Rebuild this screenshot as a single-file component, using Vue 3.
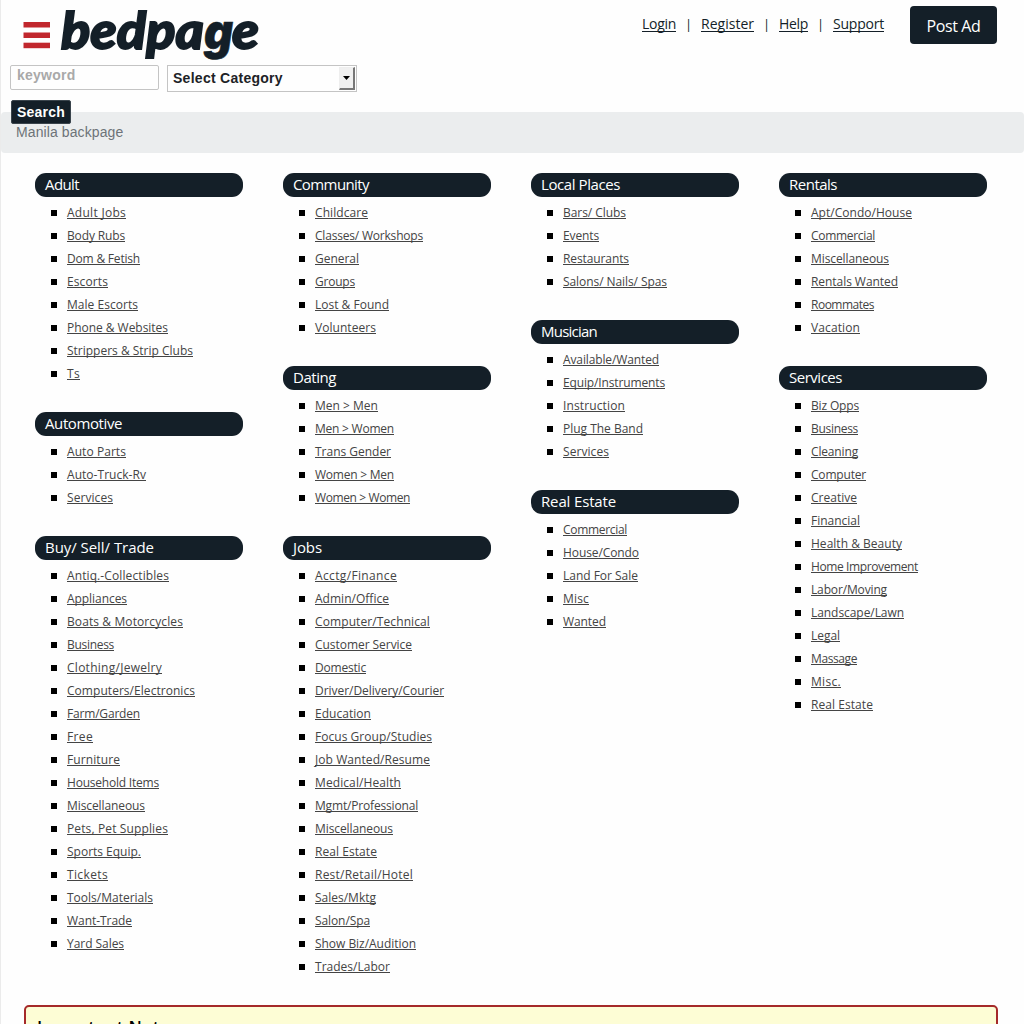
<script setup>
const columns = [
  [
    { title: 'Adult', w: 34, items: [['Adult Jobs', 59], ['Body Rubs', 58], ['Dom & Fetish', 73], ['Escorts', 41], ['Male Escorts', 71], ['Phone & Websites', 101], ['Strippers & Strip Clubs', 126], ['Ts', 13]] },
    { title: 'Automotive', w: 77, items: [['Auto Parts', 59], ['Auto-Truck-Rv', 79], ['Services', 46]] },
    { title: 'Buy/ Sell/ Trade', w: 109, items: [['Antiq.-Collectibles', 102], ['Appliances', 60], ['Boats & Motorcycles', 116], ['Business', 47], ['Clothing/Jewelry', 95], ['Computers/Electronics', 128], ['Farm/Garden', 73], ['Free', 26], ['Furniture', 53], ['Household Items', 92], ['Miscellaneous', 78], ['Pets, Pet Supplies', 101], ['Sports Equip.', 74], ['Tickets', 41], ['Tools/Materials', 86], ['Want-Trade', 65], ['Yard Sales', 57]] }
  ],
  [
    { title: 'Community', w: 76, items: [['Childcare', 53], ['Classes/ Workshops', 108], ['General', 44], ['Groups', 40], ['Lost & Found', 74], ['Volunteers', 61]] },
    { title: 'Dating', w: 43, items: [['Men > Men', 63], ['Men > Women', 79], ['Trans Gender', 76], ['Women > Men', 79], ['Women > Women', 95]] },
    { title: 'Jobs', w: 29, items: [['Acctg/Finance', 82], ['Admin/Office', 74], ['Computer/Technical', 115], ['Customer Service', 97], ['Domestic', 51], ['Driver/Delivery/Courier', 129], ['Education', 56], ['Focus Group/Studies', 117], ['Job Wanted/Resume', 115], ['Medical/Health', 86], ['Mgmt/Professional', 103], ['Miscellaneous', 78], ['Real Estate', 62], ['Rest/Retail/Hotel', 98], ['Sales/Mktg', 61], ['Salon/Spa', 55], ['Show Biz/Audition', 101], ['Trades/Labor', 75]] }
  ],
  [
    { title: 'Local Places', w: 79, items: [['Bars/ Clubs', 63], ['Events', 36], ['Restaurants', 66], ['Salons/ Nails/ Spas', 104]] },
    { title: 'Musician', w: 56, items: [['Available/Wanted', 96], ['Equip/Instruments', 102], ['Instruction', 62], ['Plug The Band', 80], ['Services', 46]] },
    { title: 'Real Estate', w: 75, items: [['Commercial', 64], ['House/Condo', 76], ['Land For Sale', 75], ['Misc', 26], ['Wanted', 43]] }
  ],
  [
    { title: 'Rentals', w: 48, items: [['Apt/Condo/House', 101], ['Commercial', 64], ['Miscellaneous', 78], ['Rentals Wanted', 87], ['Roommates', 63], ['Vacation', 49]] },
    { title: 'Services', w: 53, items: [['Biz Opps', 48], ['Business', 47], ['Cleaning', 47], ['Computer', 55], ['Creative', 46], ['Financial', 49], ['Health & Beauty', 91], ['Home Improvement', 107], ['Labor/Moving', 76], ['Landscape/Lawn', 93], ['Legal', 29], ['Massage', 46], ['Misc.', 30], ['Real Estate', 62]] }
  ]
]

// Tracks the label out or in so that it fills the given width.
const vFit = {
  mounted(el, { value }) {
    const natural = el.getBoundingClientRect().width
    el.style.letterSpacing = (value - natural) / el.textContent.length + 'px'
  }
}
</script>

<template>
  <div class="page">
    <header class="top">
      <svg class="logo" width="250" height="64" viewBox="0 0 250 64">
        <g fill="#c1272d">
          <rect x="13.500" y="22" width="26.500" height="5.500" />
          <rect x="13.500" y="32.500" width="26.500" height="5.500" />
          <rect x="13.500" y="42.700" width="26.500" height="5.500" />
        </g>
        <text y="49"><tspan x="51" textLength="143" lengthAdjust="spacingAndGlyphs">bedpa</tspan><tspan class="g" x="194" textLength="29" lengthAdjust="spacingAndGlyphs">g</tspan><tspan x="222" textLength="27" lengthAdjust="spacingAndGlyphs">e</tspan></text>
      </svg>
      <nav class="links">
        <a v-fit="34">Login</a><i>|</i><a v-fit="53">Register</a><i>|</i><a v-fit="29">Help</a><i>|</i><a v-fit="51">Support</a>
        <button class="post"><span v-fit="54">Post Ad</span></button>
      </nav>
    </header>
    <form class="search">
      <div class="keyword">keyword</div>
      <div class="select">
        <span>Select Category</span>
        <b class="arrow"><svg width="7" height="4"><path d="M0 0H7L3.500 4Z" /></svg></b>
      </div>
    </form>
    <button class="go">Search</button>
    <div class="crumb">Manila backpage</div>
    <main class="columns">
      <div v-for="(col, c) in columns" :key="c" class="column">
        <section v-for="s in col" :key="s.title">
          <h2><span v-fit="s.w">{{ s.title }}</span></h2>
          <ul>
            <li v-for="i in s.items" :key="i[0]"><a v-fit="i[1]">{{ i[0] }}</a></li>
          </ul>
        </section>
      </div>
    </main>
    <aside class="note"><h3><span v-fit="133">Important Note</span></h3></aside>
  </div>
</template>

<style>
html, body { margin: 0; overflow: hidden; background: #fff; }
</style>

<style scoped>
* { box-sizing: border-box; }
.page { height: 1024px; overflow: hidden; border-left: 1px solid #ebebeb; font-family: "Open Sans", "Noto Sans", sans-serif; color: #141f28; background: #fefefe; }
.top { display: flex; justify-content: space-between; height: 64px; padding: 0 27px 0 9px; }
.logo { overflow: visible; }
.logo text { font: italic 900 51px Lato, sans-serif; fill: #141f28; stroke: #141f28; stroke-width: 1.8px; }
.logo .g { font-family: Inter, sans-serif; font-size: 49px; stroke-width: .6px; }
.links { display: flex; align-items: flex-start; font-size: 14px; line-height: 20px; padding-top: 6px; }
.links a, .links i { margin-top: 8px; white-space: nowrap; }
.links a { text-decoration: underline; text-underline-offset: 2px; text-decoration-thickness: 1px; text-decoration-skip-ink: none; }
.links i { width: 25px; text-align: center; font-style: normal; font-size: 13px; }
.post { width: 87px; height: 38px; margin-left: 26px; padding: 1px 0 0; border: 0; border-radius: 4px; background: #141f28; color: #fff; font: 16px "Open Sans", sans-serif; white-space: nowrap; }
.search { display: flex; gap: 8px; padding: 1px 0 0 9px; height: 36px; font: bold 14px "Liberation Sans", Arial, sans-serif; }
.keyword { width: 149px; height: 25px; border: 1px solid #c4c4c4; border-radius: 2px; padding-left: 6px; line-height: 19px; color: #a9a9a9; letter-spacing: .25px; }
.select { width: 190px; height: 27px; border: 1px solid #c4c4c4; padding: 1px 1px 1px 5px; display: flex; justify-content: space-between; line-height: 23px; letter-spacing: .27px; color: #1d2226; }
.arrow { width: 16px; height: 23px; background: #f0f0f0; border: 1px solid #eee; border-right: 2px solid #777; border-bottom: 2px solid #777; display: flex; align-items: center; justify-content: center; }
.go { display: block; position: relative; z-index: 1; width: 60px; height: 24px; margin-left: 10px; padding: 0; border: 1px solid #3a444c; border-radius: 2px; background: #141f28; color: #fff; font: bold 14px "Liberation Sans", Arial, sans-serif; letter-spacing: .2px; }
.crumb { height: 41px; margin-top: -12px; padding-left: 15px; border-radius: 4px; background: #ebedee; color: #6d7378; font: 14px/41px "Liberation Sans", Arial, sans-serif; letter-spacing: .1px; }
.columns { display: flex; gap: 40px; height: 852px; padding: 20px 0 0 34px; }
.column { width: 208px; }
section { margin-bottom: 27px; }
h2 { height: 24px; margin: 0 0 4px; padding-left: 10px; border-radius: 11px; background: #141f28; color: #fff; font-size: 15px; font-weight: 400; line-height: 22px; white-space: nowrap; }
ul { list-style: none; margin: 0; padding: 0 0 0 16px; }
li { display: flex; align-items: center; height: 23px; white-space: nowrap; font-size: 12px; line-height: 23px; color: #444; }
li::before { content: ""; flex: none; width: 6px; height: 6px; margin-right: 10px; background: #000; }
li a { text-decoration: underline; text-decoration-skip-ink: none; text-decoration-thickness: 1px; text-underline-offset: 1px; }
.note { height: 100px; margin: 0 26px 0 23px; padding: 7px 11px; border: 2px solid #a52a2a; border-radius: 5px; background: #fdfdd5; }
h3 { margin: 0; color: #000; font-size: 17px; font-weight: 600; line-height: 26px; white-space: nowrap; }
</style>
